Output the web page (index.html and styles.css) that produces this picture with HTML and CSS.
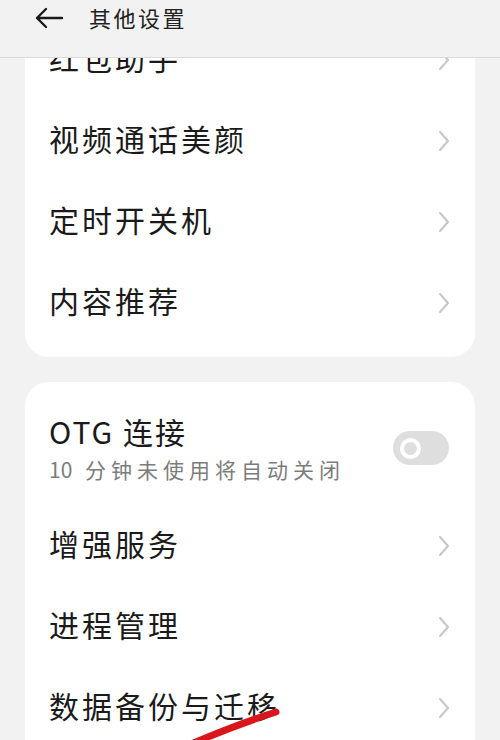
FILE: index.html
```html
<!DOCTYPE html>
<html>
<head>
    <meta charset="utf-8">
    <title>其他设置</title>
    <link rel="stylesheet" href="styles.css">
</head>
<body>
    <div class="screen">
        <header class="topbar">
            <svg class="back" width="30" height="22" viewBox="0 0 30 22">
                <path d="M28 11 H3 M12 2 L3 11 L12 20" fill="none" stroke="#1a1a1a" stroke-width="2.4" stroke-linecap="round" stroke-linejoin="round"/>
            </svg>
            <h1 class="title">其他设置</h1>
        </header>

        <main class="content">
            <section class="card card-first">
                <div class="row">
                    <span class="label">红包助手</span>
                    <svg class="chevron" width="14" height="22" viewBox="0 0 14 22"><path d="M3 2 L11 11 L3 20"/></svg>
                </div>
                <div class="row">
                    <span class="label">视频通话美颜</span>
                    <svg class="chevron" width="14" height="22" viewBox="0 0 14 22"><path d="M3 2 L11 11 L3 20"/></svg>
                </div>
                <div class="row">
                    <span class="label">定时开关机</span>
                    <svg class="chevron" width="14" height="22" viewBox="0 0 14 22"><path d="M3 2 L11 11 L3 20"/></svg>
                </div>
                <div class="row">
                    <span class="label">内容推荐</span>
                    <svg class="chevron" width="14" height="22" viewBox="0 0 14 22"><path d="M3 2 L11 11 L3 20"/></svg>
                </div>
            </section>

            <section class="card">
                <div class="row row-tall">
                    <div class="text">
                        <span class="label">OTG 连接</span>
                        <span class="sub"><span class="num">10</span> 分钟未使用将自动关闭</span>
                    </div>
                    <div class="switch"><span class="knob"></span></div>
                </div>
                <div class="row">
                    <span class="label">增强服务</span>
                    <svg class="chevron" width="14" height="22" viewBox="0 0 14 22"><path d="M3 2 L11 11 L3 20"/></svg>
                </div>
                <div class="row">
                    <span class="label">进程管理</span>
                    <svg class="chevron" width="14" height="22" viewBox="0 0 14 22"><path d="M3 2 L11 11 L3 20"/></svg>
                </div>
                <div class="row">
                    <span class="label">数据备份与迁移</span>
                    <svg class="chevron" width="14" height="22" viewBox="0 0 14 22"><path d="M3 2 L11 11 L3 20"/></svg>
                </div>
            </section>
        </main>

        <!-- hand drawn marker on top of the screenshot -->
        <svg class="marker" width="500" height="740" viewBox="0 0 500 740">
            <path d="M276 712 Q232 726 182 748" fill="none" stroke="#d9161c" stroke-width="7" stroke-linecap="round"/>
        </svg>
    </div>
</body>
</html>
```

FILE: styles.css
```css
body {
    margin: 0;
    background: #f2f2f2;
    font-family: "Noto Sans CJK SC", "Noto Sans", sans-serif;
    color: #1a1a1a;
}

.screen {
    position: relative;
    width: 500px;
    height: 740px;
    overflow: hidden;
}

.topbar {
    position: relative;
    z-index: 2;
    display: flex;
    align-items: flex-start;
    height: 57px;
    padding: 0 0 0 34px;
    background: #f2f2f2;
    border-bottom: 1px solid #dadada;
}

.back {
    margin-top: 7px;
}

.title {
    margin: 0 0 0 25px;
    font-size: 22px;
    font-weight: normal;
    letter-spacing: 2.5px;
    line-height: 34px;
    color: #222;
}

.content {
    display: flex;
    flex-direction: column;
    gap: 25px;
    padding: 0 25px;
}

.card {
    background: #fff;
    border-radius: 24px;
    padding: 14px 0;
}

/* list is scrolled, top of the first card sits under the bar */
.card-first {
    margin-top: -53px;
}

.row {
    display: flex;
    align-items: center;
    justify-content: space-between;
    height: 81px;
    padding: 0 24px 0 24px;
}

.label {
    font-size: 30px;
    letter-spacing: 3px;
    line-height: 38px;
    padding-bottom: 6px;
    white-space: nowrap;
}

.chevron path {
    fill: none;
    stroke: #c6c6c6;
    stroke-width: 2;
    stroke-linecap: round;
    stroke-linejoin: round;
}

.row-tall {
    height: 109px;
    align-items: flex-start;
    padding-right: 22px;
}

.text {
    display: flex;
    flex-direction: column;
    padding-top: 16px;
}

.text .label {
    padding-bottom: 0;
    letter-spacing: 2px;
}

.sub {
    margin-top: 4px;
    font-size: 21px;
    letter-spacing: 5px;
    line-height: 30px;
    color: #7c7c7c;
    white-space: nowrap;
}

.num {
    letter-spacing: 0;
    margin-right: 3px;
}

.switch {
    display: flex;
    align-items: center;
    width: 56px;
    height: 34px;
    margin: 35px 4px 0 0;
    border-radius: 17px;
    background: #dedede;
}

.knob {
    width: 13px;
    height: 13px;
    margin-left: 7px;
    border: 4.5px solid #fff;
    border-radius: 50%;
    background: #dedede;
}

.marker {
    position: absolute;
    left: 0;
    top: 0;
    z-index: 3;
    pointer-events: none;
}
```
